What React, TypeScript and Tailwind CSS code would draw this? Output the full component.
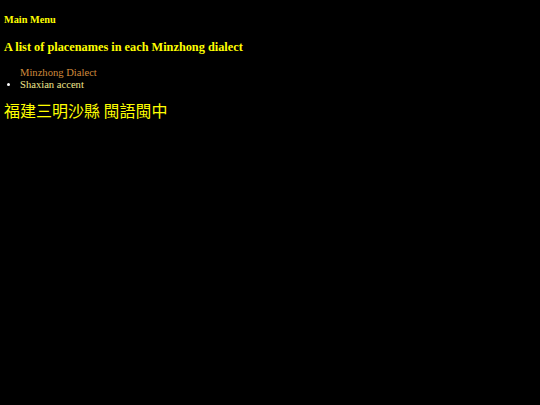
import React from "react";

const serif = "font-['Liberation_Serif','Times_New_Roman',serif]";

export default function App() {
    return (
        <div className={`min-h-screen bg-black px-1 pt-[14px] ${serif}`}>
            {/* Top heading */}
            <h4 className="text-[10.3px] font-bold leading-[12px] text-[#ffff00]">Main Menu</h4>

            <h3 className="mt-[14px] text-[12.3px] font-bold leading-[14px] text-[#ffff00]">
                A list of placenames in each Minzhong dialect
            </h3>

            {/* Dialect list */}
            <ul className="mt-[13px] pl-4 text-[10.6px] leading-[12px]">
                <li className="list-none text-[#d08a3c]">Minzhong Dialect</li>
                <li className="list-disc text-[#f0e68c] marker:text-white">Shaxian accent</li>
            </ul>

            <p className="mt-[9px] font-['Noto_Sans_CJK_TC','Noto_Sans_CJK_SC',sans-serif] text-[16px] font-normal leading-[20px] text-[#ffff00]">
                福建三明沙縣 閩語閩中
            </p>
        </div>
    );
}
